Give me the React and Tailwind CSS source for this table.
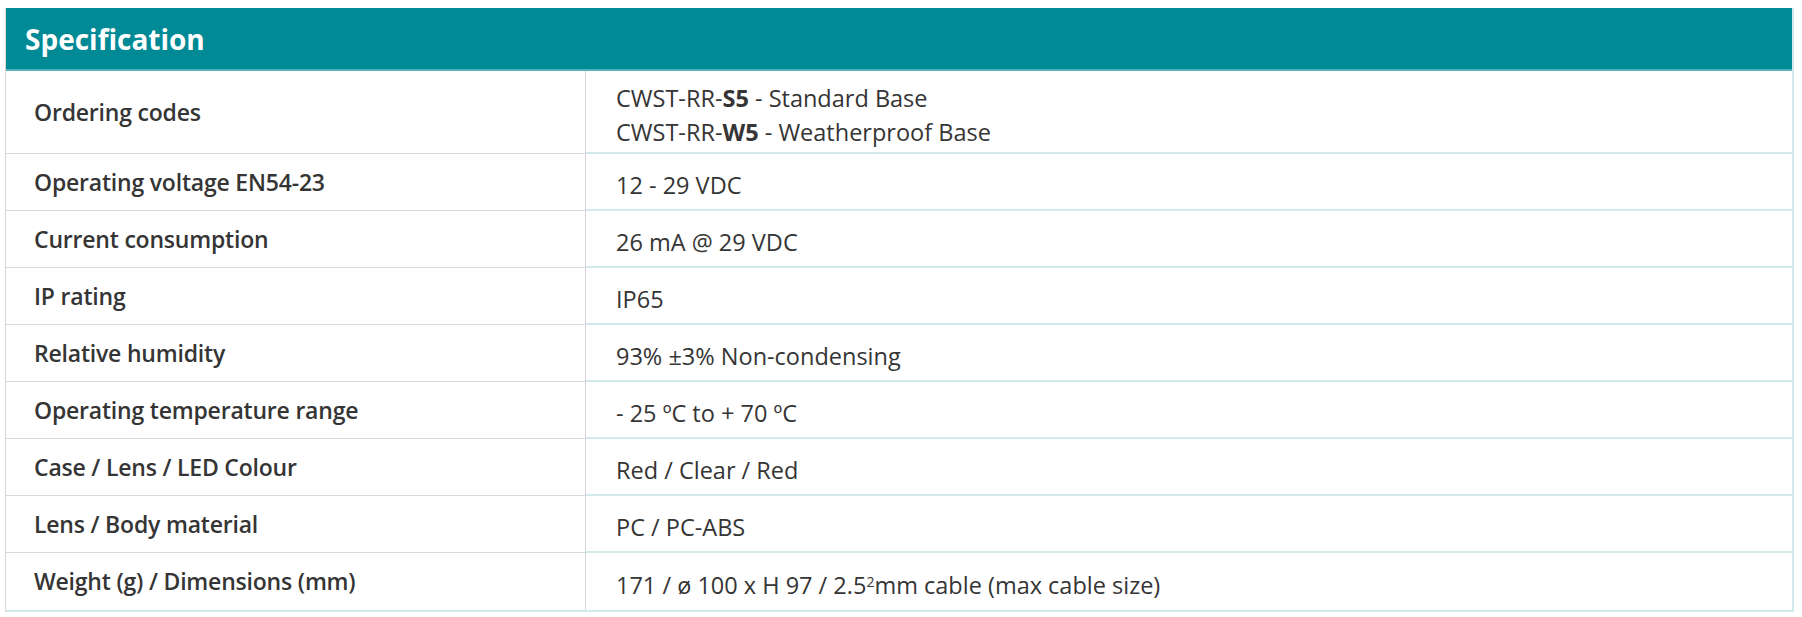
const rows = [
  {
    label: 'Ordering codes',
    tall: true,
    value: (
      <>
        <p>CWST-RR-<b className="font-bold">S5</b> - Standard Base</p>
        <p>CWST-RR-<b className="font-bold">W5</b> - Weatherproof Base</p>
      </>
    ),
  },
  { label: 'Operating voltage EN54-23', value: '12 - 29 VDC' },
  { label: 'Current consumption', value: '26 mA @ 29 VDC' },
  { label: 'IP rating', value: 'IP65' },
  { label: 'Relative humidity', value: '93% ±3% Non-condensing' },
  { label: 'Operating temperature range', value: '- 25 ºC to + 70 ºC' },
  { label: 'Case / Lens / LED Colour', value: 'Red / Clear / Red' },
  { label: 'Lens / Body material', value: 'PC / PC-ABS' },
  {
    label: 'Weight (g) / Dimensions (mm)',
    value: (
      <p>
        171 / ø 100 x H 97 / 2.5<sup className="text-[14px]">2</sup>mm cable (max cable size)
      </p>
    ),
  },
]

export default function App() {
  return (
    <div className="w-[1802px] h-[617px] bg-white pt-[8px] pl-[5px] font-['Open_Sans',sans-serif] text-[#353535]">
      <div className="w-[1789px] border-l border-l-[#d6d6d6] border-r-2 border-r-[#cfe9ed] border-b-2 border-b-[#d3e9ec]">
        {/* Cabeçalho */}
        <div className="h-[63px] bg-[#008a96] flex items-center pl-[19px] border-b-2 border-b-[#4fb3bc]">
          <h2 className="text-white font-bold text-[28px]">Specification</h2>
        </div>

        {rows.map((r, i) => (
          <div
            key={r.label}
            className={`grid grid-cols-[580px_1fr] ${r.tall ? 'h-[83px]' : 'h-[57px]'}`}
          >
            <div
              className={`flex items-center pl-[28px] border-r border-r-[#d6d6d6] ${
                i < rows.length - 1 ? 'border-b border-b-[#dadada]' : ''
              }`}
            >
              <span className="font-semibold text-[23px] tracking-[-0.2px]">{r.label}</span>
            </div>
            <div
              className={`flex flex-col justify-center pl-[30px] pt-[6px] text-[23.5px] leading-[34px] ${
                i < rows.length - 1 ? 'border-b-2 border-b-[#d3e9ec]' : ''
              }`}
            >
              {typeof r.value === 'string' ? <p>{r.value}</p> : r.value}
            </div>
          </div>
        ))}
      </div>
    </div>
  )
}
